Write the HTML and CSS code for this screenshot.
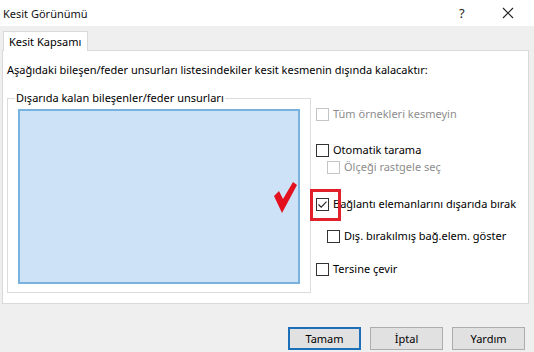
FILE: index.html
```html
<!DOCTYPE html>
<html lang="tr">
<head>
<meta charset="utf-8">
<title>Kesit Görünümü</title>
<link rel="stylesheet" href="styles.css">
</head>
<body>
<div class="window">
  <div class="titlebar">
    <span class="title">Kesit Görünümü</span>
    <span class="tb-help">?</span>
    <span class="tb-close"><svg width="12" height="12" viewBox="0 0 12 12"><path d="M1 1L11 11M11 1L1 11" stroke="#222" stroke-width="1.1" fill="none"/></svg></span>
  </div>
  <div class="client">
    <div class="tabs"><div class="tab">Kesit Kapsamı</div></div>
    <div class="panel">
      <p class="intro">Aşağıdaki bileşen/feder unsurları listesindekiler kesit kesmenin dışında kalacaktır:</p>
      <div class="row">
        <fieldset class="group">
          <legend>Dışarıda kalan bileşenler/feder unsurları</legend>
          <div class="listbox"></div>
        </fieldset>
        <div class="options">
          <label class="opt disabled o-tum"><span class="cb"></span>Tüm örnekleri kesmeyin</label>
          <label class="opt o-oto"><span class="cb"></span>Otomatik tarama</label>
          <label class="opt disabled sub o-olc"><span class="cb"></span>Ölçeği rastgele seç</label>
          <label class="opt o-bag"><span class="cb checked"><svg width="11" height="11" viewBox="0 0 11 11"><path d="M1.5 5.5L4.2 8.2L9.5 2.6" stroke="#222" stroke-width="1.1" fill="none"/></svg><span class="highlight"></span></span>Bağlantı elemanlarını dışarıda bırak</label>
          <label class="opt sub o-dis"><span class="cb"></span>Dış. bırakılmış bağ.elem. göster</label>
          <label class="opt o-ter"><span class="cb"></span>Tersine çevir</label>
        </div>
        <svg class="redcheck" width="27" height="35" viewBox="0 0 27 35"><path d="M2 16L7 11L11 19L21 2L25 5L10 33Z" fill="#e3101e"/></svg>
      </div>
    </div>
    <div class="buttons">
      <button class="btn default">Tamam</button>
      <button class="btn">İptal</button>
      <button class="btn">Yardım</button>
    </div>
  </div>
</div>
</body>
</html>
```
FILE: styles.css
```css
html, body {
  margin: 0;
  padding: 0;
}
body {
  width: 534px;
  height: 352px;
  overflow: hidden;
  background: #f0eff0;
  font-family: "Noto Sans", "Open Sans", sans-serif;
  font-size: 11px;
  color: #000;
}
.window {
  display: flex;
  flex-direction: column;
  height: 352px;
}
.titlebar {
  height: 26px;
  background: #fff;
  display: flex;
  align-items: center;
  padding-left: 3px;
}
.title {
  flex: 1;
  color: #111;
}
.tb-help {
  width: 12px;
  margin-right: 31px;
  font-size: 13px;
  color: #222;
}
.tb-close {
  width: 12px;
  margin-right: 20px;
  display: flex;
}
.client {
  flex: 1;
  display: flex;
  flex-direction: column;
}
.tabs {
  display: flex;
  padding: 5px 0 0 3px;
}
.tab {
  height: 19px;
  line-height: 19px;
  padding: 0 6px 0 5px;
  border: 1px solid #d9d9d9;
  border-bottom: none;
  background: #fff;
  position: relative;
  z-index: 1;
  margin-bottom: -1px;
}
.panel {
  margin: 0 5px 0 2px;
  height: 254px;
  background: #fff;
  border: 1px solid #d9d9d9;
  box-sizing: border-box;
}
.intro {
  margin: 11px 0 0 4px;
  line-height: 16px;
}
.row {
  position: relative;
  display: flex;
  margin-top: 12px;
}
.group {
  flex-shrink: 0;
  margin: 0 0 0 4px;
  padding: 3px 10px 8px 10px;
  width: 304px;
  box-sizing: border-box;
  border: 1px solid #dcdcdc;
  min-width: 0;
}
.group legend {
  padding: 0 1px;
  margin-left: -3px;
  line-height: 16px;
}
.listbox {
  height: 175px;
  background: #cde2f7;
  border: 2px solid #78b3e0;
  box-sizing: border-box;
}
.options {
  display: flex;
  flex-direction: column;
  margin-left: 5px;
}
.opt {
  display: flex;
  align-items: center;
  height: 16px;
  line-height: 16px;
  white-space: nowrap;
}
.opt.disabled {
  color: #8d8d8d;
}
.opt.sub {
  margin-left: 11px;
}
.cb {
  position: relative;
  width: 13px;
  height: 13px;
  box-sizing: border-box;
  border: 1px solid #333;
  background: #fff;
  margin-right: 4px;
  display: flex;
  align-items: center;
  justify-content: center;
}
.opt.disabled .cb {
  border-color: #c4c4c4;
}
.highlight {
  position: absolute;
  left: -7px;
  top: -10px;
  width: 31px;
  height: 32px;
  border: 3px solid #e0202b;
  box-sizing: border-box;
}
.o-tum { margin-top: 16px; }
.o-oto { margin-top: 20px; }
.o-olc { margin-top: 1px; }
.o-bag { margin-top: 21px; }
.o-dis { margin-top: 16px; }
.o-ter { margin-top: 17px; }
.redcheck {
  position: absolute;
  left: 269px;
  top: 90px;
}
.buttons {
  display: flex;
  justify-content: flex-end;
  gap: 9px;
  padding: 23px 9px 0 0;
}
.btn {
  width: 73px;
  height: 23px;
  font-family: inherit;
  font-size: 11px;
  background: #e1e1e1;
  border: 1px solid #adadad;
  color: #000;
  padding: 0;
}
.btn.default {
  border: 2px solid #1e6fba;
}
```
